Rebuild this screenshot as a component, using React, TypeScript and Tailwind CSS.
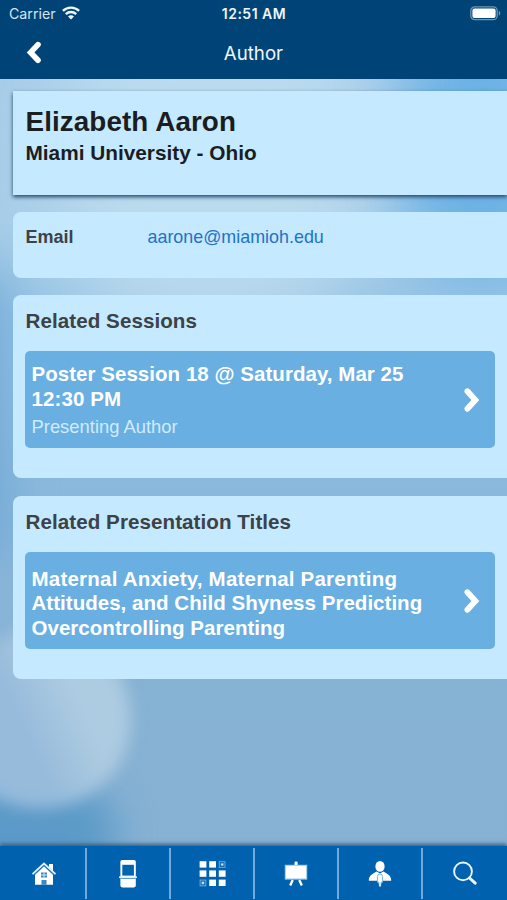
import React from 'react';

interface RelatedItem {
  id: number;
  lines: { text: string; spacing: string }[];
  role?: string;
}

const SESSIONS: RelatedItem[] = [
  {
    id: 1,
    lines: [
      { text: 'Poster Session 18 @ Saturday, Mar 25', spacing: 'tracking-[0.04px]' },
      { text: '12:30 PM', spacing: 'tracking-[0.1px]' }
    ],
    role: 'Presenting Author'
  }
];

const PRESENTATIONS: RelatedItem[] = [
  {
    id: 1,
    lines: [
      { text: 'Maternal Anxiety, Maternal Parenting', spacing: 'tracking-[0.22px]' },
      { text: 'Attitudes, and Child Shyness Predicting', spacing: 'tracking-[0.03px]' },
      { text: 'Overcontrolling Parenting', spacing: 'tracking-[0.03px]' }
    ]
  }
];

function WifiIcon() {
  return (
    <svg width="18" height="14" viewBox="0 0 18 14" fill="none" stroke="#eef6fc" strokeWidth="2.4">
      <path d="M0.9 4.9C5.4 0.5 12.6 0.5 17.1 4.9" />
      <path d="M3.8 8.1C6.8 5.3 11.2 5.3 14.2 8.1" />
      <path d="M9 13.4L6 10.4C7.7 8.9 10.3 8.9 12 10.4Z" fill="#eef6fc" stroke="none" />
    </svg>
  );
}

function BatteryIcon() {
  return (
    <svg width="31" height="15" viewBox="0 0 31 15">
      <rect x="0.8" y="0.8" width="26.4" height="12.9" rx="4" fill="none" stroke="#6d95b5" strokeWidth="1.3" />
      <rect x="2.4" y="2.4" width="23.2" height="9.7" rx="2" fill="#fff" />
      <path d="M28.8 5C30.8 5.6 30.8 8.9 28.8 9.5Z" fill="#6d95b5" />
    </svg>
  );
}

function Chevron({ left = false }: { left?: boolean }) {
  return left ? (
    <svg width="16" height="24" viewBox="0 0 16 24" fill="none" stroke="#fff" strokeWidth="5.6" strokeLinecap="round">
      <path d="M12 3.6L4.6 11.4L12 19.2" />
    </svg>
  ) : (
    <svg width="17" height="26" viewBox="0 0 17 26" fill="none" stroke="#fff" strokeWidth="5.8" strokeLinecap="round">
      <path d="M3.4 4.2L11.4 13L3.4 21.8" />
    </svg>
  );
}

function HomeIcon() {
  return (
    <svg width="26" height="26" viewBox="0 0 26 26">
      <path d="M18 3H22V11L18 7Z" fill="#fff" />
      <path d="M1.5 13.1L13 2.5L24.5 13.1" fill="none" stroke="#e4f1fb" strokeWidth="1.8" />
      <path d="M4 13.5L13 5.2L22 13.5V23.8H4Z" fill="#fff" />
      <path d="M10 11.5H16V16.5H10ZM10.5 19H15.5V23.8H10.5Z" fill="#3b86c4" />
      <path d="M13 11.5V16.5M10 14H16" stroke="#d5e9f8" strokeWidth="1" />
      <path d="M3.5 13.9L13 5L22.5 13.9" fill="none" stroke="#4a90c9" strokeWidth="0.8" />
    </svg>
  );
}

function KioskIcon() {
  return (
    <svg width="20" height="30" viewBox="0 0 20 30">
      <rect x="2.4" y="1" width="15.4" height="27.4" rx="1.8" fill="#fff" />
      <rect x="4.3" y="5.8" width="11.6" height="10.8" fill="#0063b0" />
      <path d="M2 19H18L17.5 20H2.5Z" fill="#5c9dd1" />
      <path d="M1 18.2H19" stroke="#dceefb" strokeWidth="1.6" />
    </svg>
  );
}

function GridIcon() {
  const cells = [0, 1, 2, 3, 4, 5, 6, 7, 8];
  return (
    <svg width="28" height="28" viewBox="0 0 28 28">
      {cells.map((i) => {
        const x = 1.6 + (i % 3) * 9.6;
        const y = 1.2 + Math.floor(i / 3) * 9.2;
        // Cantos marcados do ícone
        if (i === 2 || i === 6) {
          return (
            <g key={i} fill="none" stroke="#6fa9d7">
              <rect x={x + 0.5} y={y + 0.5} width="5.7" height="5.7" strokeWidth="1" />
              <rect x={x + 2.2} y={y + 2.2} width="2.3" height="2.3" fill="#d5e9f7" strokeWidth="0.5" />
            </g>
          );
        }
        return <rect key={i} x={x} y={y} width="6.8" height="6.4" fill="#fff" />;
      })}
    </svg>
  );
}

function BoardIcon() {
  return (
    <svg width="24" height="26" viewBox="0 0 24 26">
      <rect x="10.5" y="0.6" width="3.2" height="4" rx="1.3" fill="#fff" />
      <rect x="1.4" y="4.4" width="21.2" height="13.6" fill="#fff" stroke="#a9d0ec" strokeWidth="1.2" />
      <path d="M8.7 19.1L6.2 24.6M15.3 19.1L17.8 24.6" stroke="#fff" strokeWidth="2.4" />
    </svg>
  );
}

function SpeakerIcon() {
  return (
    <svg width="24" height="28" viewBox="0 0 24 28">
      <ellipse cx="12" cy="6.4" rx="4.6" ry="5.4" fill="#fff" />
      <path d="M0.8 20.8C0.8 16 3.5 14.4 8.7 11.6L12 13.4L15.3 11.6C20.5 14.4 23.2 16 23.2 20.8Z" fill="#fff" />
      <rect x="9.4" y="14" width="5.2" height="9.4" rx="2.6" fill="#f5fbff" stroke="#7ab2dc" strokeWidth="1" />
      <path d="M12 23V26.5" stroke="#cfe6f7" strokeWidth="2.2" />
    </svg>
  );
}

function SearchIcon() {
  return (
    <svg width="26" height="26" viewBox="0 0 26 26" fill="none" stroke="#eaf6ff">
      <circle cx="11" cy="10.4" r="8.9" strokeWidth="1.9" />
      <path d="M17.5 17L23.2 22.2" strokeWidth="3" strokeLinecap="round" />
    </svg>
  );
}

const TABS = [
  { label: 'home', icon: <HomeIcon /> },
  { label: 'exhibit', icon: <KioskIcon /> },
  { label: 'schedule', icon: <GridIcon /> },
  { label: 'posters', icon: <BoardIcon /> },
  { label: 'speakers', icon: <SpeakerIcon /> },
  { label: 'search', icon: <SearchIcon /> }
];

function Backdrop() {
  return (
    <div className="absolute inset-0 -z-10 overflow-hidden bg-[linear-gradient(180deg,#a8cde9_0px,#a6cde9_220px,#94c2e4_330px,#8ab8dc_500px,#86b2d4_680px,#87b1d3_900px)]">
      <div className="absolute -top-10 left-[60px] h-[400px] w-[300px] rounded-full bg-[#c3dff0]/70 blur-[40px]" />
      <div className="absolute -right-12 top-0 h-[280px] w-[150px] rounded-full bg-[#5fabe4]/80 blur-[30px]" />
      <div className="absolute -left-10 top-[270px] h-[290px] w-[50px] rounded-full bg-[#69a4d2]/70 blur-[22px]" />
      <div className="absolute -left-16 top-[780px] h-[110px] w-[180px] rounded-full bg-[#5698c7]/90 blur-[18px]" />
      <div className="absolute -left-[50px] top-[630px] h-[178px] w-[181px] rounded-full bg-[linear-gradient(65deg,#96bbdb_42%,#adcbe1_66%)] blur-[8px]" />
    </div>
  );
}

function RelatedCard({ title, items }: { title: string; items: RelatedItem[] }) {
  return (
    <section className="rounded-l-lg bg-[#c5e9ff] pr-3 pb-[30px] pl-3">
      <h3 className="flex h-14 items-center pb-1 pl-[0.5px] text-[20.6px] font-bold tracking-[0.06px] text-[#3c4246]">
        {title}
      </h3>
      {items.map((item) => (
        <button
          key={item.id}
          className="flex h-[97px] w-full items-center justify-between rounded-[5px] bg-[#69afe2] pr-[14px] pl-[6.5px] text-left"
        >
          <div className={item.role ? 'pt-[2px]' : 'pt-[6px]'}>
            {item.lines.map((line) => (
              <p
                key={line.text}
                className={`whitespace-nowrap text-[20.5px] font-bold leading-[24.5px] text-white ${line.spacing}`}
              >
                {line.text}
              </p>
            ))}
            {item.role && <p className="pt-1 text-[18.4px] leading-6 text-[#d0ebff]">{item.role}</p>}
          </div>
          <Chevron />
        </button>
      ))}
    </section>
  );
}

function App() {
  return (
    <div className="relative isolate flex h-[900px] w-[507px] flex-col overflow-hidden font-['Liberation_Sans',Arial,sans-serif]">
      <Backdrop />

      {/* Barra de status e título */}
      <header className="h-[79px] shrink-0 bg-[#004477] font-[Inter,sans-serif] text-[#eef6fc]">
        <div className="grid h-[27px] grid-cols-3 items-center pr-[6px] pl-[9px]">
          <div className="flex items-center gap-[6px] text-[14.2px] text-[#d5e5f1]">
            <span>Carrier</span>
            <WifiIcon />
          </div>
          <span className="pr-[2px] text-center text-[14px] font-semibold tracking-[0.5px]">12:51 AM</span>
          <div className="flex justify-end">
            <BatteryIcon />
          </div>
        </div>
        <div className="grid h-[51px] grid-cols-3 items-center">
          <button className="pl-[26px]" aria-label="back">
            <Chevron left />
          </button>
          <h1 className="pt-[3px] text-center text-[18.7px]">Author</h1>
        </div>
      </header>

      <main className="flex flex-1 flex-col pt-3 pl-[13px]">
        <section className="h-[104px] bg-[#c5e9ff] pt-[15px] pl-[12.5px] text-[#1b1d1f] shadow-[0_2px_4px_#24466b]">
          <h2 className="text-[27.8px] font-bold leading-8 tracking-[0.1px]">Elizabeth Aaron</h2>
          <p className="text-[20.8px] font-bold leading-[30px]">Miami University - Ohio</p>
        </section>

        <section className="mt-[17px] flex h-[66px] rounded-l-lg bg-[#c5e9ff] pt-[13px] pl-[12.5px] leading-6">
          <span className="w-[122px] text-[18px] font-bold text-[#3c4246]">Email</span>
          <a className="text-[17.9px] text-[#1f72c8]">aarone@miamioh.edu</a>
        </section>

        <div className="mt-[17px] flex flex-col gap-[18px]">
          <RelatedCard title="Related Sessions" items={SESSIONS} />
          <RelatedCard title="Related Presentation Titles" items={PRESENTATIONS} />
        </div>
      </main>

      {/* Navegação inferior */}
      <nav className="grid h-[54px] shrink-0 grid-cols-6 bg-[#0062af] pt-[2px] pb-px pl-[2.5px] shadow-[0_-2px_4px_#3c5c78]">
        {TABS.map((tab) => (
          <button
            key={tab.label}
            aria-label={tab.label}
            className="flex items-center justify-center border-r-2 border-[#6faada] last:border-r-0"
          >
            {tab.icon}
          </button>
        ))}
      </nav>
    </div>
  );
}

export default App;
